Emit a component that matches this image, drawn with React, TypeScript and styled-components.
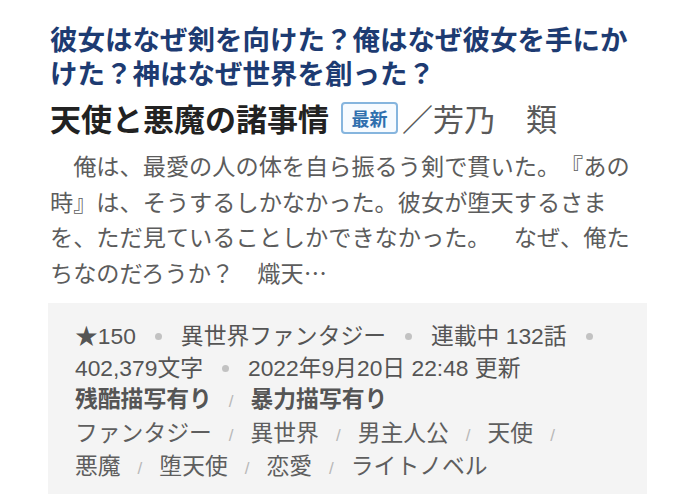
import styled, { createGlobalStyle } from "styled-components";

const GlobalStyle = createGlobalStyle`
  html, body {
    margin: 0;
    padding: 0;
    background: #fff;
  }
  body {
    font-family: "Liberation Sans", "Noto Sans CJK JP", sans-serif;
    text-spacing-trim: space-all;
  }
`;

const Page = styled.div`
  width: 680px;
  height: 500px;
  box-sizing: border-box;
  padding: 21px 33px 0 48px;
  overflow: hidden;
`;

const Catch = styled.h2`
  margin: 0 0 0 2px;
  font-family: "Noto Sans CJK JP", sans-serif;
  font-size: 27.5px;
  line-height: 34px;
  font-weight: 700;
  color: #1d3b72;
`;

const TitleRow = styled.div`
  display: flex;
  align-items: center;
  margin: 9px 0 0 2px;
  height: 40px;
  font-family: "Noto Sans CJK JP", sans-serif;
`;

const Title = styled.h1`
  margin: 0;
  font-size: 31px;
  font-weight: 700;
  line-height: 40px;
  color: #222;
`;

const Badge = styled.span`
  display: inline-flex;
  align-items: center;
  justify-content: center;
  margin-left: 12px;
  width: 53px;
  height: 28px;
  border: 2px solid #86b5de;
  border-radius: 4px;
  background: #f7fbff;
  color: #2f6fae;
  font-size: 18px;
  font-weight: 700;
  line-height: 1;
`;

const Author = styled.span`
  margin-left: 4px;
  font-size: 31px;
  font-weight: 400;
  color: #5a5a5a;
  line-height: 40px;
`;

const Synopsis = styled.p`
  margin: 10px 0 0 2px;
  font-family: "Noto Sans CJK JP", sans-serif;
  font-size: 23.2px;
  line-height: 35.5px;
  color: #5c5c5c;
  white-space: pre;
`;

const InfoBox = styled.div`
  margin-top: 13px;
  width: 599px;
  box-sizing: border-box;
  padding: 17px 14px 9px 27px;
  background: #f4f4f4;
  font-size: 22.8px;
  color: #555;
`;

const Meta = styled.div`
  line-height: 32px;
`;

const Item = styled.span`
  white-space: nowrap;
`;

const Dot = styled.span`
  display: inline-block;
  width: 7px;
  height: 7px;
  margin: 0 19px;
  border-radius: 50%;
  background: #c2c2c2;
  vertical-align: middle;
  position: relative;
  top: -1px;
`;

const Tags = styled.div<{ $strong?: boolean }>`
  line-height: 30.5px;
  font-weight: ${(p) => (p.$strong ? 700 : 400)};
  color: ${(p) => (p.$strong ? "#555" : "#5e5e5e")};
`;

const Slash = styled.span`
  display: inline-block;
  margin: 0 17px;
  font-size: 17px;
  font-weight: 400;
  color: #b8b8b8;
`;

const meta = [
  "★150",
  "異世界ファンタジー",
  "連載中 132話",
  "402,379文字",
  "2022年9月20日 22:48 更新",
];

const warnings = ["残酷描写有り", "暴力描写有り"];

const keywords = [
  "ファンタジー",
  "異世界",
  "男主人公",
  "天使",
  "悪魔",
  "堕天使",
  "恋愛",
  "ライトノベル",
];

const synopsis = [
  "\u3000俺は、最愛の人の体を自ら振るう剣で貫いた。『あの",
  "時』は、そうするしかなかった。彼女が堕天するさま",
  "を、ただ見ていることしかできなかった。\u3000なぜ、俺た",
  "ちなのだろうか？\u3000熾天…",
].join("\n");

const TagList = ({ tags, strong }: { tags: string[]; strong?: boolean }) => (
  <Tags $strong={strong}>
    {tags.map((t, i) => (
      <Item key={t}>
        {t}
        {i < tags.length - 1 && <Slash>/</Slash>}
      </Item>
    ))}
  </Tags>
);

export default function App() {
  return (
    <Page>
      <GlobalStyle />
      <Catch>
        彼女はなぜ剣を向けた？俺はなぜ彼女を手にか
        <br />
        けた？神はなぜ世界を創った？
      </Catch>
      <TitleRow>
        <Title>天使と悪魔の諸事情</Title>
        <Badge>最新</Badge>
        <Author>／芳乃　類</Author>
      </TitleRow>
      <Synopsis>{synopsis}</Synopsis>
      <InfoBox>
        <Meta>
          {meta.map((m, i) => (
            <Item key={m}>
              {m}
              {i < meta.length - 1 && <Dot />}
            </Item>
          ))}
        </Meta>
        <TagList tags={warnings} strong />
        <TagList tags={keywords} />
      </InfoBox>
    </Page>
  );
}
